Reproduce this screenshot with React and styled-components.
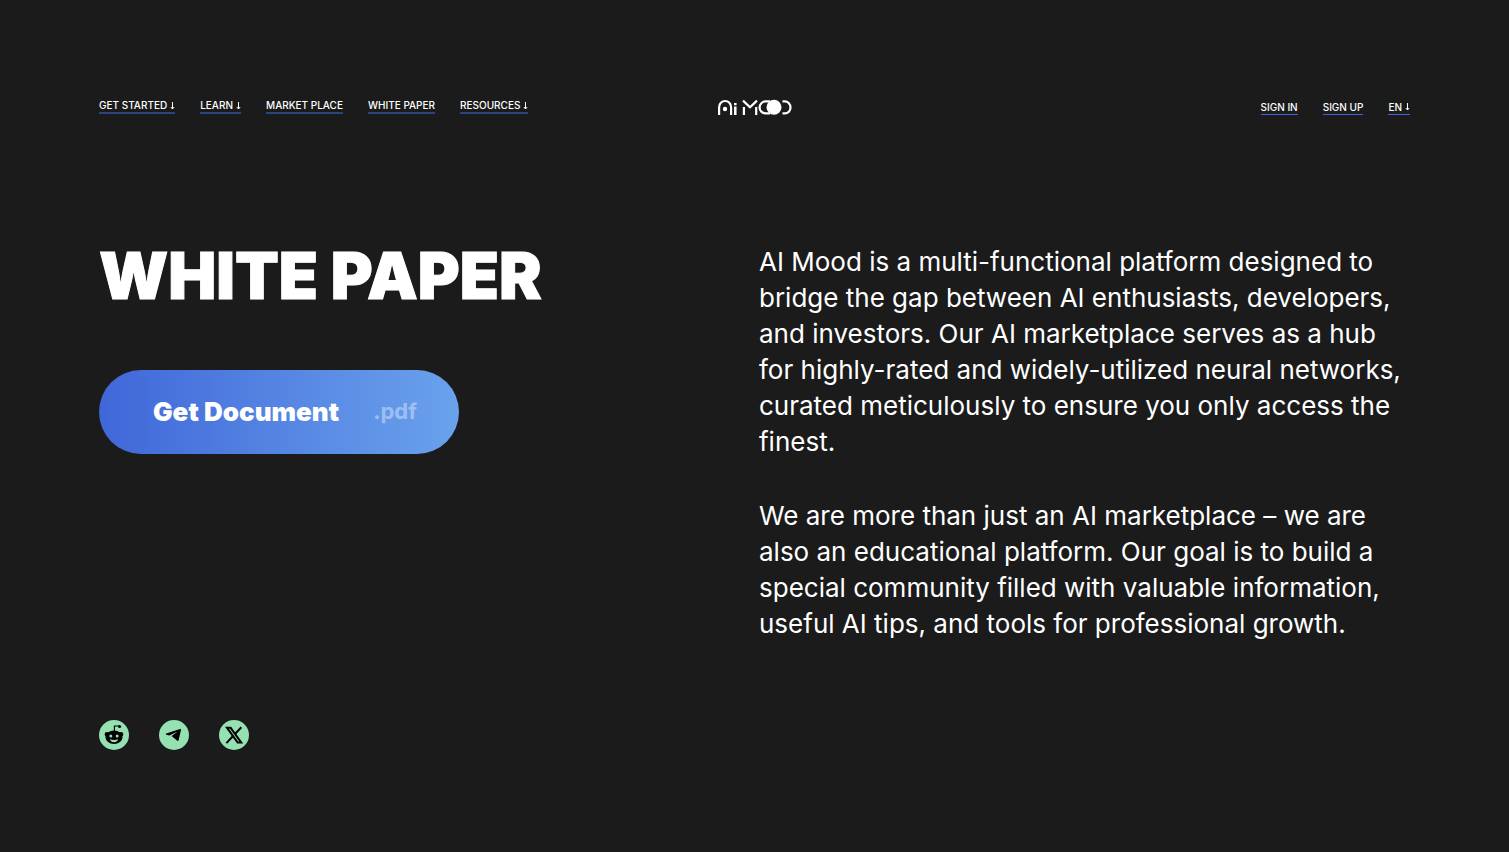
import React from "react";
import styled, { createGlobalStyle } from "styled-components";

const GlobalStyle = createGlobalStyle`
  *, *::before, *::after { box-sizing: border-box; }
  body {
    margin: 0;
    background: #1b1b1b;
    color: #fff;
    font-family: Inter, "Liberation Sans", sans-serif;
  }
`;

const Page = styled.div`
  min-height: 100vh;
  padding: 99px;
  display: flex;
  flex-direction: column;
`;

const Header = styled.header`
  display: grid;
  grid-template-columns: 1fr auto 1fr;
  align-items: start;
`;

const Nav = styled.nav`
  display: flex;
  gap: 25px;
  justify-content: ${(p) => (p.$end ? "flex-end" : "flex-start")};
  padding-top: ${(p) => (p.$end ? 1 : 0)}px;
`;

const NavLink = styled.a`
  display: inline-flex;
  align-items: center;
  gap: 3px;
  color: #fff;
  font-size: 10px;
  font-weight: 500;
  line-height: ${(p) => (p.$thin ? 14 : 13)}px;
  white-space: nowrap;
  text-decoration: none;
  border-bottom: ${(p) => (p.$thin ? "1px solid #3f66dc" : "2px solid #2d437f")};
`;

const Main = styled.main`
  display: grid;
  grid-template-columns: 1fr 1fr;
  column-gap: 9px;
  margin-top: 129px;
`;

const Title = styled.h1`
  margin: 0;
  font-size: 64px;
  font-weight: 900;
  line-height: 64px;
  -webkit-text-stroke: 1px #fff;
`;

const DocumentButton = styled.button`
  display: flex;
  align-items: center;
  justify-content: space-between;
  width: 360px;
  height: 84px;
  margin-top: 62px;
  padding: 0 42px 2px 54px;
  border: 0;
  border-radius: 42px;
  background: linear-gradient(90deg, #4067d9, #6aa2ec);
  color: #fff;
  font-family: inherit;
  font-size: 26px;
  font-weight: 900;
  cursor: pointer;
`;

const Extension = styled.span`
  color: rgba(255, 255, 255, 0.4);
  font-size: 22px;
  font-weight: 700;
`;

const Copy = styled.div`
  font-size: 26px;
  line-height: 36px;
`;

const Paragraph = styled.p`
  margin: 0 0 38px;
`;

const Socials = styled.footer`
  display: flex;
  gap: 30px;
  margin-top: 40px;
`;

const SocialLink = styled.a`
  display: block;
  width: 30px;
  height: 30px;
  border-radius: 50%;
  background: #95e1b1;
  color: #000;
`;

const Arrow = () => (
  <svg width="5" height="10" viewBox="0 0 5 10" fill="none" stroke="#fff" aria-hidden="true">
    <path d="M2.5 1v7M.8 6l1.7 2 1.7-2" />
  </svg>
);

const Logo = () => (
  <svg width="75" height="16" viewBox="0 0 75 16" fill="none" stroke="#fff" strokeWidth="2.2" role="img" aria-label="Ai Mood">
    <path d="M2.1 16V8.200a6 6.200 0 0 1 12 0V16" />
    <circle cx="8" cy="10" r="2.200" fill="#fff" stroke="none" />
    <path d="M18.300 7.600V16M18.300 4v2.300" strokeWidth="2.500" />
    <path d="M26.900 8v8M39.200 8v8M26 1.600l7 6.600 7-6.600" />
    <path d="M53 2.400H48.600a5.800 5.800 0 0 0 0 12H53" />
    <circle cx="57" cy="8.300" r="7.500" fill="#fff" stroke="none" />
    <path d="M65.500 2.400h2.400a5.600 6 0 0 1 0 12h-2.400" />
  </svg>
);

const Reddit = () => (
  <svg width="30" height="30" viewBox="0 0 30 30" aria-hidden="true">
    <g fill="currentColor">
      <circle cx="8" cy="14.300" r="2.300" />
      <circle cx="22" cy="14.300" r="2.300" />
      <ellipse cx="15" cy="17.300" rx="8.500" ry="6.700" />
      <circle cx="20.600" cy="6.400" r="1.500" />
    </g>
    <path d="M15.400 11V6h5" fill="none" stroke="currentColor" strokeWidth="1.100" />
    <g fill="#95e1b1">
      <circle cx="11.800" cy="16" r="1.500" />
      <circle cx="18.200" cy="16" r="1.500" />
      <path d="M10.800 19.200q4.200 1.400 8.400 0c-.6 2-2.100 3-4.200 3s-3.600-1-4.200-3z" />
    </g>
  </svg>
);

const Telegram = () => (
  <svg width="30" height="30" viewBox="0 0 30 30" aria-hidden="true">
    <path
      d="M7.200 13.600 21 9.100q1.300-.3 1 1L19.600 20.300q-.3 1.200-1.300.4L12.600 16l6.200-4.600-8.500 4.100-3.100-.8q-.9-.6 0-1.100z"
      fill="currentColor"
    />
  </svg>
);

const XMark = () => (
  <svg width="30" height="30" viewBox="0 0 30 30" fill="none" stroke="currentColor" aria-hidden="true">
    <path d="M8 7.800h3.600l10.600 14.600h-3.600z" strokeWidth="2" />
    <path d="m22.300 7.200-6.300 6.800M13.600 16.500l-6.200 6.600" strokeWidth="2" />
  </svg>
);

const links = [
  { label: "GET STARTED", menu: true },
  { label: "LEARN", menu: true },
  { label: "MARKET PLACE" },
  { label: "WHITE PAPER" },
  { label: "RESOURCES", menu: true },
];

const account = [{ label: "SIGN IN" }, { label: "SIGN UP" }, { label: "EN", menu: true }];

export default function App() {
  return (
    <>
      <GlobalStyle />
      <Page>
        <Header>
          <Nav aria-label="Main">
            {links.map((l) => (
              <NavLink href="#" key={l.label}>
                {l.label}
                {l.menu && <Arrow />}
              </NavLink>
            ))}
          </Nav>
          <Logo />
          <Nav $end aria-label="Account">
            {account.map((l) => (
              <NavLink href="#" key={l.label} $thin>
                {l.label}
                {l.menu && <Arrow />}
              </NavLink>
            ))}
          </Nav>
        </Header>
        <Main>
          <div>
            <Title>WHITE PAPER</Title>
            <DocumentButton type="button">
              Get Document
              <Extension>.pdf</Extension>
            </DocumentButton>
          </div>
          <Copy>
            <Paragraph>
              AI Mood is a multi-functional platform designed to bridge the gap between AI
              enthusiasts, developers, and investors. Our AI marketplace serves as a hub for
              highly-rated and widely-utilized neural networks, curated meticulously to ensure
              you only access the finest.
            </Paragraph>
            <Paragraph>
              We are more than just an AI marketplace – we are also an educational platform. Our
              goal is to build a special community filled with valuable information, useful AI
              tips, and tools for professional growth.
            </Paragraph>
          </Copy>
        </Main>
        <Socials>
          <SocialLink href="#" aria-label="Reddit">
            <Reddit />
          </SocialLink>
          <SocialLink href="#" aria-label="Telegram">
            <Telegram />
          </SocialLink>
          <SocialLink href="#" aria-label="X">
            <XMark />
          </SocialLink>
        </Socials>
      </Page>
    </>
  );
}
